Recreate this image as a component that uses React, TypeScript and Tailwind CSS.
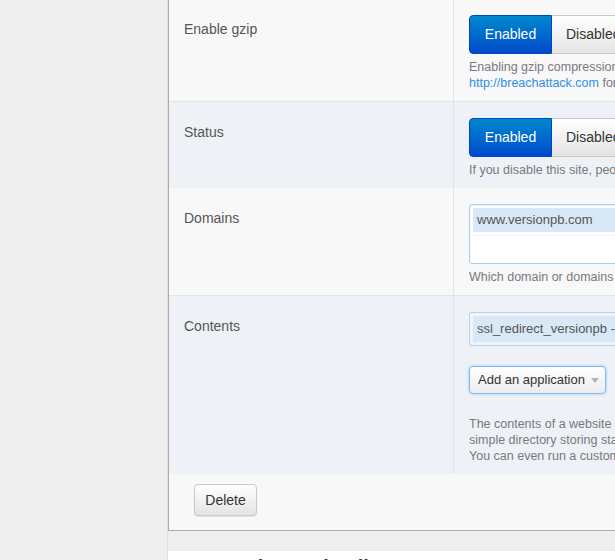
import type { ReactNode } from "react";

const font = { fontFamily: '"Liberation Sans", Arial, sans-serif' };

function Toggle() {
  return (
    <div className="flex h-[39px]">
      <button className="w-[83px] h-full rounded-l-[4px] border border-[#0046c4] bg-gradient-to-b from-[#0088cc] to-[#0048cc] text-[14px] text-white">
        Enabled
      </button>
      <button className="w-[90px] h-full rounded-r-[4px] border border-l-0 border-[#c8c8c8] bg-gradient-to-b from-[#ffffff] to-[#e4e4e4] text-[14px] text-[#333] text-left pl-[14px]">
        Disabled
      </button>
    </div>
  );
}

function Row({
  label,
  blue,
  first,
  children,
}: {
  label: string;
  blue?: boolean;
  first?: boolean;
  children: ReactNode;
}) {
  return (
    <div className={`flex ${blue ? "bg-[#eef2f6] border-t border-[#dee4ea]" : "bg-[#f8f8f8]"}`}>
      <div
        className={`w-[284px] shrink-0 pl-[15px] text-[14px] leading-[20px] text-[#555] ${first ? "pt-[19px]" : "pt-[20px]"}`}
      >
        {label}
      </div>
      <div
        className={`flex-1 border-l border-[#dee4ea] pl-[15px] pb-[10px] ${first ? "pt-[15px]" : "pt-[16px]"}`}
      >
        {children}
      </div>
    </div>
  );
}

function Help({ children, className = "" }: { children: ReactNode; className?: string }) {
  return (
    <p className={`text-[12.5px] leading-[16px] text-[#787880] whitespace-nowrap ${className}`}>{children}</p>
  );
}

export default function App() {
  return (
    <div className="w-[615px] h-[560px] overflow-hidden bg-[#eeeeee] flex" style={font}>
      <div className="w-[168px] shrink-0 border-r border-[#e2e2e2]" />
      <div className="w-[760px] shrink-0 flex flex-col">
        <div className="shrink-0 border-l border-b border-[#ababab]">
          <Row label="Enable gzip" first>
            <Toggle />
            <Help className="mt-[5px]">
              Enabling gzip compression can make your site faster, but may expose it to the BREACH attack. See
              <br />
              <a className="text-[#2f8fe8]">http://breachattack.com</a> for more information.
            </Help>
          </Row>

          <Row label="Status" blue>
            <Toggle />
            <Help className="mt-[5px]">
              If you disable this site, people will not be able to access it.
            </Help>
          </Row>

          <Row label="Domains">
            <div className="w-[300px] h-[60px] rounded-[3px] border border-[#a8cdef] bg-white p-[3px] shadow-[inset_0_1px_2px_rgba(0,0,0,0.08)]">
              <div className="h-[24px] bg-[#d9e8f7] pl-[4px] text-[13px] leading-[24px] text-[#555]">
                www.versionpb.com
              </div>
              <div className="mt-[3px] h-[1px] bg-[#eef2f5]" />
            </div>
            <Help className="mt-[5px]">Which domain or domains will serve this website.</Help>
          </Row>

          <Row label="Contents" blue>
            <div className="w-[300px] h-[34px] rounded-[2px] border border-[#b6d3ee] bg-[#eef4fa] p-[3px]">
              <div className="h-[26px] bg-[#d9e8f7] pl-[4px] text-[13px] leading-[26px] text-[#555] whitespace-nowrap">
                ssl_redirect_versionpb - Static-only redirect
              </div>
            </div>
            <button className="mt-[20px] flex items-center h-[28px] w-[137px] rounded-[4px] border border-[#86b8ea] bg-gradient-to-b from-[#ffffff] to-[#ececec] pl-[8px] text-[13px] text-[#333] shadow-[0_0_3px_rgba(82,168,236,0.6)]">
              Add an application
              <svg width="8" height="5" viewBox="0 0 8 5" className="ml-[6px] mt-[1px]">
                <path d="M0 0h8L4 5z" fill="#b4b4b4" />
              </svg>
            </button>
            <Help className="mt-[22px]">
              The contents of a website are provided by one or more applications. This might be a
              <br />
              simple directory storing static files, or a Django, Rails or PHP application.
              <br />
              You can even run a custom server process.
            </Help>
          </Row>

          <div className="bg-[#f8f8f8] h-[56px] pl-[25px] pt-[10px]">
            <button className="h-[32px] w-[63px] rounded-[4px] border border-[#c8c8c8] bg-gradient-to-b from-[#ffffff] to-[#e4e4e4] text-[14px] text-[#333] shadow-[0_1px_1px_rgba(0,0,0,0.08)]">
              Delete
            </button>
          </div>
        </div>
        <div className="h-[20px] shrink-0" />
        <div className="flex-1 shrink-0 bg-white pl-[60px] pt-[4px]">
          <h2 className="text-[20px] font-bold text-[#333] leading-[24px] whitespace-nowrap">Web app details</h2>
        </div>
      </div>
    </div>
  );
}
